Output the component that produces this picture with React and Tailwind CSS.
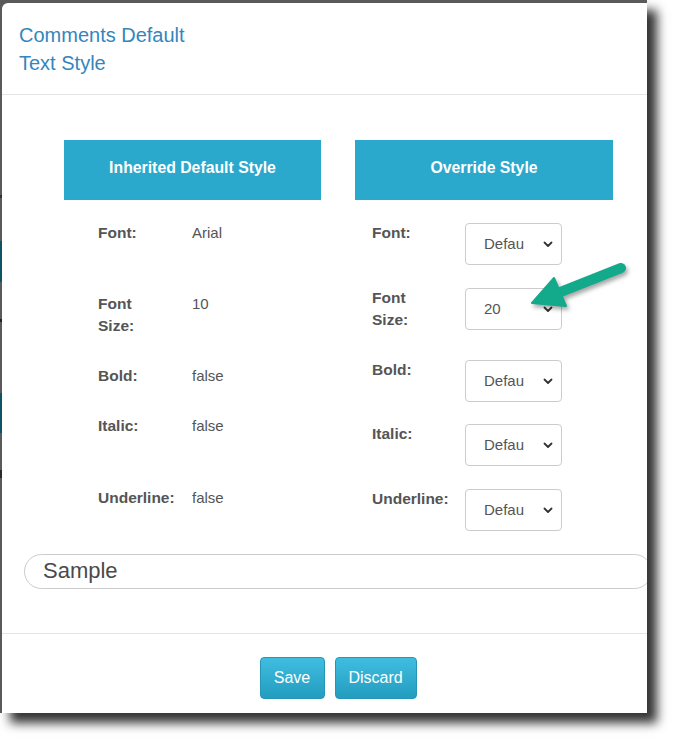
import React from "react";

function Chevron() {
  return (
    <svg width="10" height="7" viewBox="0 0 10 7" className="shrink-0">
      <path d="M1.5 1.5 L5 5 L8.5 1.5" fill="none" stroke="#333" strokeWidth="1.8" strokeLinecap="round" strokeLinejoin="round" />
    </svg>
  );
}

function Select({ value }) {
  return (
    <div className="w-[97px] h-[42px] shrink-0 border border-[#cccccc] rounded-[4px] bg-white flex items-center pl-[18px] pr-[8px]">
      <span className="flex-1 text-[15px] text-[#555]">{value}</span>
      <Chevron />
    </div>
  );
}

const leftRows = [
  { label: ["Font:"], value: "Arial", h: "h-[71px]" },
  { label: ["Font", "Size:"], value: "10", h: "h-[72px]" },
  { label: ["Bold:"], value: "false", h: "h-[50px]" },
  { label: ["Italic:"], value: "false", h: "h-[72px]" },
  { label: ["Underline:"], value: "false", h: "h-[66px]" },
];

const rightRows = [
  { label: ["Font:"], value: "Defau", mt: "mt-[23px]", h: "h-[42px]" },
  { label: ["Font", "Size:"], value: "20", mt: "mt-[23px]", h: "h-[49px]" },
  { label: ["Bold:"], value: "Defau", mt: "mt-[23px]", h: "h-[42px]" },
  { label: ["Italic:"], value: "Defau", mt: "mt-[22px]", h: "h-[42px]" },
  { label: ["Underline:"], value: "Defau", mt: "mt-[23px]", h: "h-[42px]" },
];

function Label({ lines }) {
  return (
    <div className="font-bold text-[15.5px] leading-[22px] text-[#555]">
      {lines.map((l, i) => (
        <div key={i}>{l}</div>
      ))}
    </div>
  );
}

export default function App() {
  return (
    <div
      className="w-[689px] h-[755px] bg-white relative overflow-hidden antialiased"
      style={{ fontFamily: '"Liberation Sans", Arial, sans-serif' }}
    >
      <div className="w-[647px] h-[713px] bg-[#5a5a5a] shadow-[10px_10px_10px_rgba(0,0,0,0.8)] flex overflow-hidden">
        <div className="w-[2px] shrink-0 flex flex-col">
          <div className="h-[195px] bg-[#5a5a5a]" />
          <div className="h-[3px] bg-[#333]" />
          <div className="h-[43px] bg-[#5a5a5a]" />
          <div className="h-[41px] bg-[#0d5566]" />
          <div className="h-[37px] bg-[#5a5a5a]" />
          <div className="h-[3px] bg-[#222]" />
          <div className="h-[71px] bg-[#5a5a5a]" />
          <div className="h-[40px] bg-[#0d5566]" />
          <div className="h-[37px] bg-[#5a5a5a]" />
          <div className="h-[8px] bg-[#2a2a2a]" />
          <div className="flex-1 bg-[#5a5a5a]" />
        </div>
        <div className="flex-1 pt-[3px] flex">
          <div className="w-[672px] shrink-0 bg-white rounded-tl-[6px] flex flex-col">
            {/* header */}
            <div className="pt-[18px] pb-[17px] px-[17px] border-b border-[#e5e5e5]">
              <div className="text-[20px] leading-[28px] text-[#3386bd]">
                <div>Comments Default</div>
                <div>Text Style</div>
              </div>
            </div>
            {/* body */}
            <div className="pt-[45px] pb-[44px]">
              <div className="flex items-start pl-[62px] gap-[34px]">
                {/* left column */}
                <div className="w-[257px]">
                  <div className="h-[60px] pb-[5px] bg-[#2aa9cc] flex items-center justify-center text-white font-bold text-[15.8px]">
                    Inherited Default Style
                  </div>
                  {leftRows.map((r, i) => (
                    <div key={i} className={`${r.h} pt-[22px] pl-[34px] flex items-start`}>
                      <div className="w-[94px] shrink-0">
                        <Label lines={r.label} />
                      </div>
                      <div className="text-[15px] leading-[22px] text-[#555]">{r.value}</div>
                    </div>
                  ))}
                </div>
                {/* right column */}
                <div className="w-[258px]">
                  <div className="h-[60px] pb-[5px] bg-[#2aa9cc] flex items-center justify-center text-white font-bold text-[15.8px]">
                    Override Style
                  </div>
                  {rightRows.map((r, i) => (
                    <div key={i} className={`${r.mt} ${r.h} pl-[17px] flex items-start`}>
                      <div className="w-[93px] shrink-0 -mt-px">
                        <Label lines={r.label} />
                      </div>
                      <Select value={r.value} />
                    </div>
                  ))}
                </div>
              </div>
              <div className="mt-[23px] mx-[22px] h-[35px] border border-[#cccccc] rounded-[18px] flex items-center pl-[18px] pb-[3px]">
                <span className="text-[22px] text-[#4a4a4a]">Sample</span>
              </div>
            </div>
            {/* footer */}
            <div className="border-t border-[#e5e5e5] pt-[23px] flex justify-center gap-[10px]">
              <button className="w-[65px] h-[42px] rounded-[4px] border border-[#2596b8] bg-gradient-to-b from-[#3fbde0] to-[#229dbf] text-white text-[16px]">
                Save
              </button>
              <button className="w-[82px] h-[42px] rounded-[4px] border border-[#2596b8] bg-gradient-to-b from-[#3fbde0] to-[#229dbf] text-white text-[16px]">
                Discard
              </button>
            </div>
          </div>
        </div>
      </div>
      {/* annotation arrow */}
      <svg
        className="absolute left-[520px] top-[255px] drop-shadow-[2px_3px_2px_rgba(0,0,0,0.35)]"
        width="115"
        height="60"
        viewBox="0 0 115 60"
      >
        <line x1="38" y1="38" x2="101" y2="13" stroke="#13a98b" strokeWidth="10" strokeLinecap="round" />
        <polygon points="12,48 34,23 46,51" fill="#13a98b" stroke="#13a98b" strokeWidth="2" strokeLinejoin="round" />
      </svg>
    </div>
  );
}
